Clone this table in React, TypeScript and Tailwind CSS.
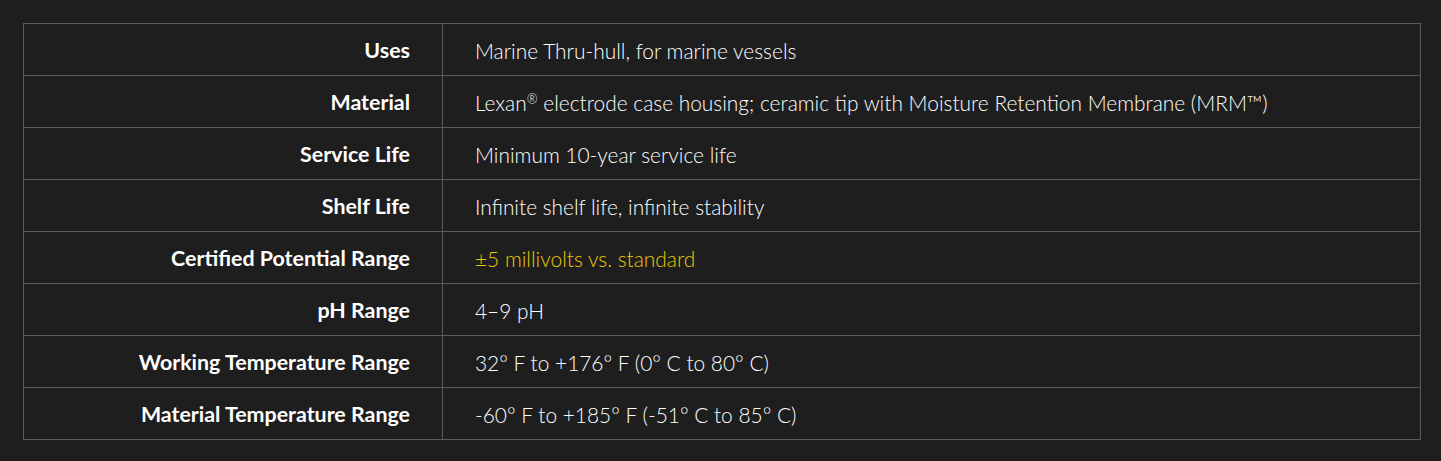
const rows: { label: string; value: React.ReactNode; highlight?: boolean }[] = [
  { label: "Uses", value: "Marine Thru-hull, for marine vessels" },
  {
    label: "Material",
    value: (
      <>
        Lexan<sup className="text-[13px]">®</sup> electrode case housing; ceramic tip with Moisture Retention Membrane (MRM™)
      </>
    ),
  },
  { label: "Service Life", value: "Minimum 10-year service life" },
  { label: "Shelf Life", value: "Infinite shelf life, infinite stability" },
  { label: "Certified Potential Range", value: "±5 millivolts vs. standard", highlight: true },
  { label: "pH Range", value: "4–9 pH" },
  { label: "Working Temperature Range", value: "32° F to +176° F (0° C to 80° C)" },
  { label: "Material Temperature Range", value: "-60° F to +185° F (-51° C to 85° C)" },
]

export default function App() {
  return (
    <div
      className="w-[1441px] h-[461px] bg-[#1e1e1e] pt-[23px] px-[23px] text-white"
      style={{ fontFamily: "Lato, 'Open Sans', sans-serif" }}
    >
      <table className="w-[1398px] border-collapse border border-[#5a5a5a]">
        <tbody>
          {rows.map((row) => (
            <tr key={row.label} className="h-[52px] border-b border-[#5a5a5a]">
              <td className="w-[419px] border-r border-[#5a5a5a] pt-[2px] pr-[32px] text-right text-[21.4px] font-bold">
                {row.label}
              </td>
              <td
                className={`pt-[2px] pl-[32px] text-[20.9px] font-light ${row.highlight ? "text-[#ecc800]" : "text-white"}`}
              >
                {row.value}
              </td>
            </tr>
          ))}
        </tbody>
      </table>
    </div>
  )
}
